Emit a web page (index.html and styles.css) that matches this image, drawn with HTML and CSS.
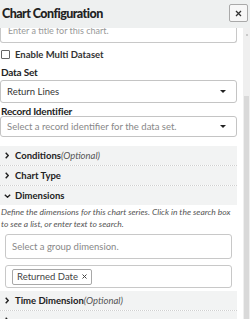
FILE: index.html
```html
<!DOCTYPE html>
<html lang="en">

<head>
    <meta charset="UTF-8">
    <title>Chart Configuration</title>
    <link rel="stylesheet" href="styles.css">
</head>

<body>
    <div class="dialog">
        <div class="dialog-header">
            <h1>Chart Configuration</h1>
            <button class="close-btn">
                <svg width="7" height="7" viewBox="0 0 7 7"><path d="M1 1L6 6M6 1L1 6" stroke="#333" stroke-width="1.3"/></svg>
            </button>
        </div>

        <div class="dialog-body">
            <div class="content">
                <div class="title-input">Enter a title for this chart.</div>

                <label class="check-row">
                    <span class="checkbox"></span>
                    Enable Multi Dataset
                </label>

                <div class="field">
                    <div class="field-label">Data Set</div>
                    <div class="select">
                        <span>Return Lines</span>
                        <span class="caret"></span>
                    </div>
                </div>

                <div class="field">
                    <div class="field-label">Record Identifier</div>
                    <div class="select small placeholder">
                        <span>Select a record identifier for the data set.</span>
                        <span class="caret"></span>
                    </div>
                </div>

                <div class="sections">
                    <div class="section">
                        <div class="section-head">
                            <svg class="chev" width="4" height="7" viewBox="0 0 4 7"><path d="M0.7 0.8L3.2 3.5L0.7 6.2" fill="none" stroke="#222" stroke-width="1.4"/></svg>
                            Conditions<em>(Optional)</em>
                        </div>
                    </div>
                    <div class="section">
                        <div class="section-head">
                            <svg class="chev" width="4" height="7" viewBox="0 0 4 7"><path d="M0.7 0.8L3.2 3.5L0.7 6.2" fill="none" stroke="#222" stroke-width="1.4"/></svg>
                            Chart Type
                        </div>
                    </div>
                    <div class="section open">
                        <div class="section-head">
                            <svg class="chev-down" width="7" height="4" viewBox="0 0 7 4"><path d="M0.8 0.7L3.5 3.2L6.2 0.7" fill="none" stroke="#222" stroke-width="1.4"/></svg>
                            Dimensions
                        </div>
                        <p class="help">Define the dimensions for this chart series. Click in the search box to see a list, or enter text to search.</p>
                        <div class="search-box">Select a group dimension.</div>
                        <div class="chip-box">
                            <span class="chip">Returned Date
                                <svg width="5" height="5" viewBox="0 0 5 5"><path d="M0.5 0.5L4.5 4.5M4.5 0.5L0.5 4.5" stroke="#444" stroke-width="1"/></svg>
                            </span>
                        </div>
                    </div>
                    <div class="section">
                        <div class="section-head">
                            <svg class="chev" width="4" height="7" viewBox="0 0 4 7"><path d="M0.7 0.8L3.2 3.5L0.7 6.2" fill="none" stroke="#222" stroke-width="1.4"/></svg>
                            Time Dimension<em>(Optional)</em>
                        </div>
                    </div>
                    <div class="section">
                        <div class="section-head">
                            <svg class="chev" width="4" height="7" viewBox="0 0 4 7"><path d="M0.7 0.8L3.2 3.5L0.7 6.2" fill="none" stroke="#222" stroke-width="1.4"/></svg>
                        </div>
                    </div>
                </div>
            </div>

            <div class="scrollbar">
                <div class="scroll-track">
                    <span class="scroll-arrow"></span>
                </div>
                <div class="scroll-thumb"></div>
            </div>
        </div>
    </div>
</body>

</html>
```

FILE: styles.css
```css
* {
    margin: 0;
    padding: 0;
    box-sizing: border-box;
}

body {
    font-family: Lato, "Open Sans", sans-serif;
    font-size: 9.5px;
    color: #333;
    background: #fff;
    width: 250px;
    height: 319px;
    overflow: hidden;
}

.dialog {
    display: flex;
    flex-direction: column;
    height: 319px;
}

.dialog-header {
    height: 28px;
    background: #eef0f0;
    display: flex;
    justify-content: space-between;
    padding: 0 2px 0 2px;
    flex-shrink: 0;
}

.dialog-header h1 {
    font-size: 12.5px;
    font-weight: 900;
    color: #222;
    letter-spacing: -0.55px;
    line-height: 15px;
    margin-top: 6px;
}

.close-btn {
    width: 19px;
    height: 18px;
    margin-top: 4px;
    border: 1px solid #a9a9a9;
    border-radius: 2px;
    background: #f7f7f7;
    display: flex;
    align-items: center;
    justify-content: center;
}

.dialog-body {
    flex: 1;
    display: flex;
    overflow: hidden;
}

.content {
    flex: 1;
    padding-right: 6px;
    overflow: hidden;
}

.title-input {
    height: 15px;
    border: 1px solid #c8c8c8;
    border-top: none;
    border-radius: 0 0 3px 3px;
    color: #999;
    line-height: 5px;
    padding-left: 7px;
    overflow: hidden;
    font-size: 9px;
}

.check-row {
    display: flex;
    align-items: center;
    gap: 5px;
    margin: 7px 0 0 1px;
    height: 9px;
    font-weight: 700;
    color: #333;
}

.checkbox {
    width: 9px;
    height: 9px;
    border: 1px solid #666;
    border-radius: 1px;
    background: #fff;
}

.field {
    margin-top: 8px;
}

.field + .field {
    margin-top: 3px;
}

.field-label {
    font-size: 10px;
    font-weight: 700;
    color: #222;
    padding-left: 1px;
    height: 10px;
    line-height: 10px;
    letter-spacing: -0.2px;
}

.select {
    margin-top: 3px;
    height: 23px;
    border: 1px solid #c4c4c4;
    border-radius: 3px;
    display: flex;
    align-items: center;
    justify-content: space-between;
    padding: 0 10px 0 6px;
    color: #333;
}

.select.small {
    margin-top: 0;
    height: 21px;
}

.select.placeholder {
    color: #888;
}

.caret {
    width: 0;
    height: 0;
    border-left: 3px solid transparent;
    border-right: 3px solid transparent;
    border-top: 3px solid #222;
}

.sections {
    margin-top: 9px;
}

.section {
    border-bottom: 1px dotted #cfcfcf;
}

.section-head {
    height: 19px;
    background: #f2f3f3;
    display: flex;
    align-items: center;
    gap: 6px;
    font-weight: 700;
    color: #222;
    padding-left: 5px;
}

.section-head em {
    font-weight: 400;
    font-style: italic;
    color: #555;
    margin-left: -6px;
}

.section-head .chev-down {
    margin-left: -1px;
    margin-right: -2px;
}

.open {
    border-bottom: none;
    padding-bottom: 3px;
}

.help {
    font-style: italic;
    color: #555;
    font-size: 8.5px;
    line-height: 12px;
    padding: 1px 0 0 1px;
    margin-right: -2px;
}

.search-box {
    margin: 4px 5px 0 5px;
    height: 25px;
    border: 1px solid #c8c8c8;
    border-radius: 3px;
    display: flex;
    align-items: center;
    padding-left: 6px;
    color: #888;
}

.chip-box {
    margin: 6px 5px 0 5px;
    height: 23px;
    border: 1px solid #c8c8c8;
    border-radius: 3px;
    display: flex;
    align-items: center;
    padding-left: 6px;
}

.chip {
    border: 1px solid #a8a8a8;
    border-radius: 2px;
    height: 16px;
    padding: 0 4px;
    display: flex;
    align-items: center;
    gap: 4px;
    color: #444;
}

.scrollbar {
    width: 7px;
    background: #efefef;
    display: flex;
    flex-direction: column;
}

.scroll-track {
    height: 68px;
    display: flex;
    justify-content: center;
    padding-top: 6px;
}

.scroll-arrow {
    width: 2px;
    height: 2px;
    background: #c9c9c9;
}

.scroll-thumb {
    flex: 1;
    background: #d9d9d9;
    margin: 0 1px;
}
```
